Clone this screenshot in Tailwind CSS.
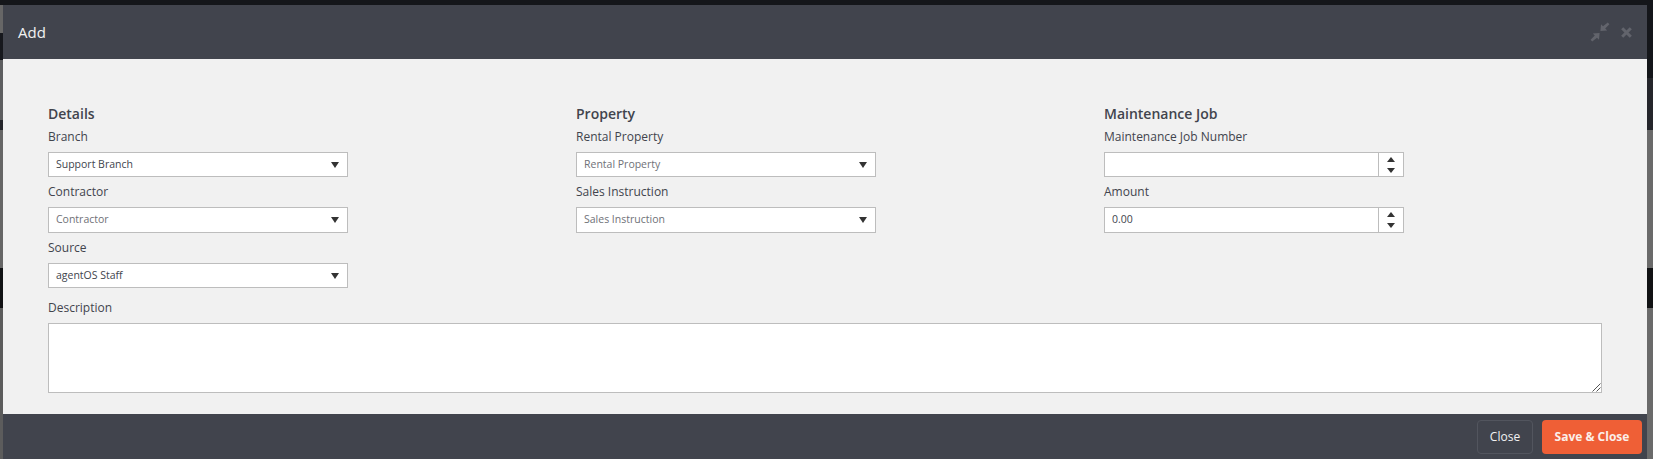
<!doctype html>
<html>
<head>
<meta charset="utf-8">
<script src="https://cdn.jsdelivr.net/npm/@tailwindcss/browser@4"></script>
</head>
<body class="relative m-0 h-[459px] w-[1653px] overflow-hidden bg-[#14161a] font-['Open_Sans',sans-serif]">
<div class="absolute left-0 top-0 flex h-[459px] w-[3px] flex-col">
  <div class="h-[5px] bg-[#14161a]"></div>
  <div class="h-[28px] bg-[#666666]"></div>
  <div class="h-[27px] bg-[#16181d]"></div>
  <div class="h-[60px] bg-[#5d5e60]"></div>
  <div class="h-[10px] bg-[#25262b]"></div>
  <div class="h-[138px] bg-[#666666]"></div>
  <div class="h-[40px] bg-[#111214]"></div>
  <div class="flex-1 bg-[#5c5c5c]"></div>
</div>
<div class="absolute right-0 top-0 flex h-[459px] w-[6px] flex-col">
  <div class="h-[78px] bg-[#14161a]"></div>
  <div class="h-[52px] bg-[#25262b]"></div>
  <div class="h-[138px] bg-[#6a6a6a]"></div>
  <div class="h-[40px] bg-[#111214]"></div>
  <div class="flex-1 bg-[#6a6a6a]"></div>
</div>
<div class="relative ml-[3px] flex h-[459px] w-[1644px] flex-col pt-[5px]">
  <header class="flex h-[54px] shrink-0 items-center justify-between bg-[#41444d] pl-[15px] pr-[15px] text-[15px] font-medium text-[#f2f2f2]">
    <span>Add</span>
    <div class="flex items-center gap-[11px]">
      <svg width="20" height="20" viewBox="0 0 20 20" fill="#62646c"><path d="M17.800.6l1.600 1.600-4.200 4.200 2 2-6.800.6.600-6.800 2 2zM2.200 19.400L.6 17.800l4.200-4.200-2-2 6.800-.6-.6 6.800-2-2z"/></svg>
      <svg width="11" height="11" viewBox="0 0 11 11" fill="none" stroke="#62646c" stroke-width="3"><path d="M1.200 1.200l8.600 8.600M9.800 1.200l-8.600 8.600"/></svg>
    </div>
  </header>
  <main class="h-[355px] shrink-0 bg-[#f1f1f1] pl-[45px] pt-[46px] text-[12px] leading-[18px] text-[#41444d]">
    <div class="grid grid-cols-[528px_528px_1fr]">
      <section class="w-[300px]">
        <h3 class="text-[14px] font-semibold leading-[18px]">Details</h3>
        <label class="mt-[5px] block">Branch</label>
        <div class="mt-[6px] flex h-[25px] items-center justify-between border border-[#bdbdbd] bg-white pb-[2px] pl-[7px] pr-[8px] text-[10.500px] text-[#41444d]"><span>Support Branch</span><svg class="mt-[2px]" width="8" height="6" viewBox="0 0 8 6" fill="#333"><path d="M0 0h8L4 6z"/></svg></div>
        <label class="mt-[6px] block">Contractor</label>
        <div class="mt-[6px] flex h-[26px] items-center justify-between border border-[#bdbdbd] bg-white pb-[2px] pl-[7px] pr-[8px] text-[10.500px] text-[#6f7177]"><span>Contractor</span><svg class="mt-[2px]" width="8" height="6" viewBox="0 0 8 6" fill="#333"><path d="M0 0h8L4 6z"/></svg></div>
        <label class="mt-[6px] block">Source</label>
        <div class="mt-[6px] flex h-[25px] items-center justify-between border border-[#bdbdbd] bg-white pb-[2px] pl-[7px] pr-[8px] text-[10.500px] text-[#41444d]"><span>agentOS Staff</span><svg class="mt-[2px]" width="8" height="6" viewBox="0 0 8 6" fill="#333"><path d="M0 0h8L4 6z"/></svg></div>
      </section>
      <section class="w-[300px]">
        <h3 class="text-[14px] font-semibold leading-[18px]">Property</h3>
        <label class="mt-[5px] block">Rental Property</label>
        <div class="mt-[6px] flex h-[25px] items-center justify-between border border-[#bdbdbd] bg-white pb-[2px] pl-[7px] pr-[8px] text-[10.500px] text-[#6f7177]"><span>Rental Property</span><svg class="mt-[2px]" width="8" height="6" viewBox="0 0 8 6" fill="#333"><path d="M0 0h8L4 6z"/></svg></div>
        <label class="mt-[6px] block">Sales Instruction</label>
        <div class="mt-[6px] flex h-[26px] items-center justify-between border border-[#bdbdbd] bg-white pb-[2px] pl-[7px] pr-[8px] text-[10.500px] text-[#6f7177]"><span>Sales Instruction</span><svg class="mt-[2px]" width="8" height="6" viewBox="0 0 8 6" fill="#333"><path d="M0 0h8L4 6z"/></svg></div>
      </section>
      <section class="w-[300px]">
        <h3 class="text-[14px] font-semibold leading-[18px]">Maintenance Job</h3>
        <label class="mt-[5px] block">Maintenance Job Number</label>
        <div class="mt-[6px] flex h-[25px] border border-[#bdbdbd] bg-white text-[10.500px]">
          <span class="flex-1"></span>
          <span class="flex w-[25px] flex-col items-center justify-center gap-[6px] border-l border-[#bdbdbd]"><svg width="8" height="5" viewBox="0 0 8 5" fill="#333"><path d="M0 5h8L4 0z"/></svg><svg width="8" height="5" viewBox="0 0 8 5" fill="#333"><path d="M0 0h8L4 5z"/></svg></span>
        </div>
        <label class="mt-[6px] block">Amount</label>
        <div class="mt-[6px] flex h-[26px] border border-[#bdbdbd] bg-white text-[10.500px] text-[#41444d]">
          <span class="flex flex-1 items-center pb-[2px] pl-[7px]">0.00</span>
          <span class="flex w-[25px] flex-col items-center justify-center gap-[6px] border-l border-[#bdbdbd]"><svg width="8" height="5" viewBox="0 0 8 5" fill="#333"><path d="M0 5h8L4 0z"/></svg><svg width="8" height="5" viewBox="0 0 8 5" fill="#333"><path d="M0 0h8L4 5z"/></svg></span>
        </div>
      </section>
    </div>
    <label class="mt-[11px] block">Description</label>
    <div class="relative mt-[6px] h-[70px] w-[1554px] border border-[#bdbdbd] bg-white">
      <svg class="absolute bottom-0 right-0" width="9" height="9" viewBox="0 0 9 9" stroke="#555" stroke-width="1"><path d="M.5 8.500l8-8M4.500 8.500l4-4"/></svg>
    </div>
  </main>
  <footer class="flex h-[45px] shrink-0 items-center justify-end gap-[9px] bg-[#41444d] pr-[5px]">
    <button class="h-[34px] w-[56px] rounded-[4px] border border-[#52555e] text-[12px] font-medium text-[#f2f2f2]">Close</button>
    <button class="h-[34px] w-[100px] rounded-[4px] bg-[#ef5f36] text-[12px] font-bold text-[#fbeee9]">Save &amp; Close</button>
  </footer>
</div>
</body>
</html>
